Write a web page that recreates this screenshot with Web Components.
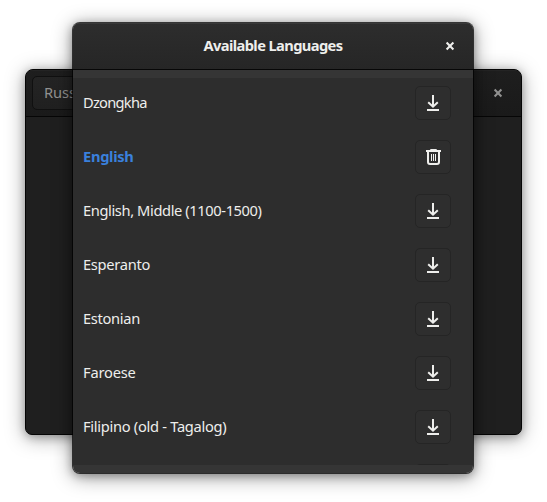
<!DOCTYPE html>
<html lang="en">
<head>
<meta charset="utf-8">
<title>Available Languages</title>
<style>
html, body { margin: 0; height: 100%; overflow: hidden; background: #fff; }
body { font: 14.67px/20px "Noto Sans", "Open Sans", sans-serif; color: #eeeeec; }
</style>
</head>
<body>
<app-desktop>
  <main-window slot="back"></main-window>
  <language-dialog slot="front" heading="Available Languages">
    <language-row style="--track:-.74px">Dzongkha</language-row>
    <language-row installed style="--track:-.3px">English</language-row>
    <language-row style="--track:-.39px">English, Middle (1100-1500)</language-row>
    <language-row style="--track:-.3px">Esperanto</language-row>
    <language-row style="--track:-.32px">Estonian</language-row>
    <language-row style="--track:-.2px">Faroese</language-row>
    <language-row style="--track:-.29px">Filipino (old - Tagalog)</language-row>
    <language-row></language-row>
  </language-dialog>
</app-desktop>
<script>
const define = (name, html, setup) => {
  const template = document.createElement('template');
  template.innerHTML = html;
  customElements.define(name, class extends HTMLElement {
    constructor() {
      super();
      this.attachShadow({ mode: 'open' }).append(template.content.cloneNode(true));
    }
    connectedCallback() { if (setup) setup(this, this.shadowRoot); }
  });
};

define('app-desktop', `
<style>
:host { display: block; position: relative; width: 547px; height: 502px; overflow: hidden; }
::slotted([slot=back]) { position: absolute; left: 25px; top: 69px; width: 497px; height: 366px; }
::slotted([slot=front]) { position: absolute; left: 72px; top: 22px; width: 402px; height: 452px; }
</style>
<slot name="back"></slot><slot name="front"></slot>`);

define('close-icon', `
<style>:host { display: block; width: 10px; height: 10px; } svg { display: block; }</style>
<svg width="10" height="10" viewBox="0 0 10 10"><path d="M1.6 1.6L8.4 8.4M8.4 1.6L1.6 8.4" fill="none" stroke="currentColor" stroke-width="2.1"/></svg>`);

define('main-window', `
<style>
:host { display: flex; flex-direction: column; box-sizing: border-box; background: #1f1f1f; border: 1px solid #050505; border-radius: 8px 8px 7px 7px; overflow: hidden; color: #919190;
  box-shadow: 0 3px 20px rgba(0,0,0,.36), 0 2px 8px rgba(0,0,0,.25); }
header { display: flex; align-items: center; justify-content: space-between; box-sizing: border-box; height: 47px; padding: 0 18px 0 6px; border-bottom: 1px solid #060606; background: linear-gradient(#1e1e1e, #1a1a1a); box-shadow: inset 0 1px #242424; }
button { all: unset; box-sizing: border-box; width: 120px; height: 34px; padding: 5px 11px 7px; border: 1px solid #101010; border-radius: 5px; background: linear-gradient(#242424,#202020); white-space: nowrap; letter-spacing: -.1px; }
</style>
<header><button>Russ</button><close-icon></close-icon></header>`);

define('language-dialog', `
<style>
:host { display: flex; flex-direction: column; box-sizing: border-box; border: 1px solid rgba(0,0,0,.72); border-top-color: #353535; border-radius: 8px; background: #353535; background-clip: padding-box; overflow: hidden;
  box-shadow: 0 3px 20px rgba(0,0,0,.4), 0 2px 8px rgba(0,0,0,.28); }
header { flex: none; display: grid; grid-template-columns: 1fr auto 1fr; align-items: center; box-sizing: border-box; height: 47px; padding: 0 18px; border-bottom: 1px solid #070707; background: linear-gradient(#2d2d2d,#262626); box-shadow: inset 0 1px #393939; }
h1 { grid-column: 2; margin: 0; padding-bottom: 2px; font-size: 14.67px; line-height: 20px; font-weight: 700; letter-spacing: -.61px; white-space: nowrap; }
close-icon { justify-self: end; }
.list { margin-top: 8px; height: 387px; flex: none; overflow: hidden; background: #2d2d2d; }
</style>
<header><h1></h1><close-icon></close-icon></header>
<div class="list"><slot></slot></div>`,
(host, root) => { root.querySelector('h1').textContent = host.getAttribute('heading'); });

define('icon-button', `
<style>
:host { display: grid; place-items: center; box-sizing: border-box; width: 36px; height: 34px; border: 1px solid #252525; border-radius: 5px; background: #2e2e2e; }
svg { display: block; }
.trash { display: none; }
:host([kind=trash]) .trash { display: block; }
:host([kind=trash]) .download { display: none; }
</style>
<svg class="download" width="16" height="16" viewBox="0 0 16 16"><path d="M8 0V11.4M3.2 7.3L8 11.7l4.8-4.4" fill="none" stroke="currentColor" stroke-width="2"/><path d="M2 14h12v2H2z" fill="currentColor"/></svg>
<svg class="trash" width="16" height="16" viewBox="0 0 16 16"><path d="M1 1h4Q5 0 6.2 0h4.6Q12 0 12 1h4v2H1zM2 3h2v10q0 1 1 1h7q1 0 1-1V3h2v10q0 3-3 3H5q-3 0-3-3z" fill="currentColor"/><path d="M6.5 5v7M8.5 5v7M10.5 5v7" stroke="currentColor"/></svg>`);

define('language-row', `
<style>
:host { display: flex; align-items: center; justify-content: space-between; box-sizing: border-box; height: 54px; padding: 0 22px 4px 10px; }
span { padding-bottom: 2px; white-space: nowrap; letter-spacing: var(--track, 0); }
:host([installed]) span { color: #3a80dc; font-weight: 700; }
</style>
<span><slot></slot></span><icon-button></icon-button>`,
(host, root) => { if (host.hasAttribute('installed')) root.querySelector('icon-button').setAttribute('kind', 'trash'); });
</script>
</body>
</html>
